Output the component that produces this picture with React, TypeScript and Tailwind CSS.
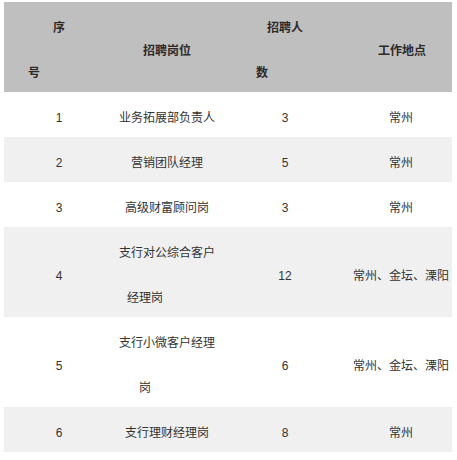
const rows = [
  { no: "1", job: ["业务拓展部负责人"], count: "3", place: "常州" },
  { no: "2", job: ["营销团队经理"], count: "5", place: "常州" },
  { no: "3", job: ["高级财富顾问岗"], count: "3", place: "常州" },
  { no: "4", job: ["支行对公综合客户", "经理岗"], indent: "pl-[13px]", count: "12", place: "常州、金坛、溧阳" },
  { no: "5", job: ["支行小微客户经理", "岗"], indent: "pl-[25px]", count: "6", place: "常州、金坛、溧阳" },
  { no: "6", job: ["支行理财经理岗"], count: "8", place: "常州" },
];

const App = () => {
  return (
    <div
      className="min-h-screen w-screen bg-white pl-[4px] pt-[2px] text-[12px] text-[#333] leading-[45px]"
      style={{ fontFamily: '"Liberation Sans", "Noto Sans CJK SC", sans-serif' }}
    >
      <div className="grid w-[448px] grid-cols-[110px_106px_130px_102px]">
        {/* Header */}
        <div className="flex h-[90px] flex-col overflow-hidden bg-[#bfbfbf] pt-[4px] font-bold text-[#2f2a2a]">
          <div className="text-center">序</div>
          <div className="pl-[24px]">号</div>
        </div>
        <div className="flex h-[90px] items-center justify-center bg-[#bfbfbf] pt-[8px] font-bold text-[#2f2a2a]">
          招聘岗位
        </div>
        <div className="flex h-[90px] flex-col overflow-hidden bg-[#bfbfbf] pt-[4px] font-bold text-[#2f2a2a]">
          <div className="text-center">招聘人</div>
          <div className="pl-[36px]">数</div>
        </div>
        <div className="flex h-[90px] items-center justify-center bg-[#bfbfbf] pl-[2px] pt-[8px] font-bold text-[#2f2a2a]">
          工作地点
        </div>

        {/* Body rows */}
        {rows.map((row, i) => {
          const bg = i % 2 === 1 ? "bg-[#f0f0f0]" : "bg-white";
          const h = row.job.length > 1 ? "h-[90px]" : "h-[45px]";
          return (
            <div key={row.no} className="contents">
              <div className={`flex items-center justify-center pt-[8px] ${h} ${bg}`}>{row.no}</div>
              <div className={`flex flex-col justify-center overflow-hidden pt-[8px] ${h} ${bg}`}>
                <div className="whitespace-nowrap text-center">{row.job[0]}</div>
                {row.job[1] && <div className={`whitespace-nowrap ${row.indent}`}>{row.job[1]}</div>}
              </div>
              <div className={`flex items-center justify-center pt-[8px] ${h} ${bg}`}>{row.count}</div>
              <div className={`flex items-center justify-center whitespace-nowrap pt-[8px] ${h} ${bg}`}>{row.place}</div>
            </div>
          );
        })}
      </div>
    </div>
  );
};

export default App;
